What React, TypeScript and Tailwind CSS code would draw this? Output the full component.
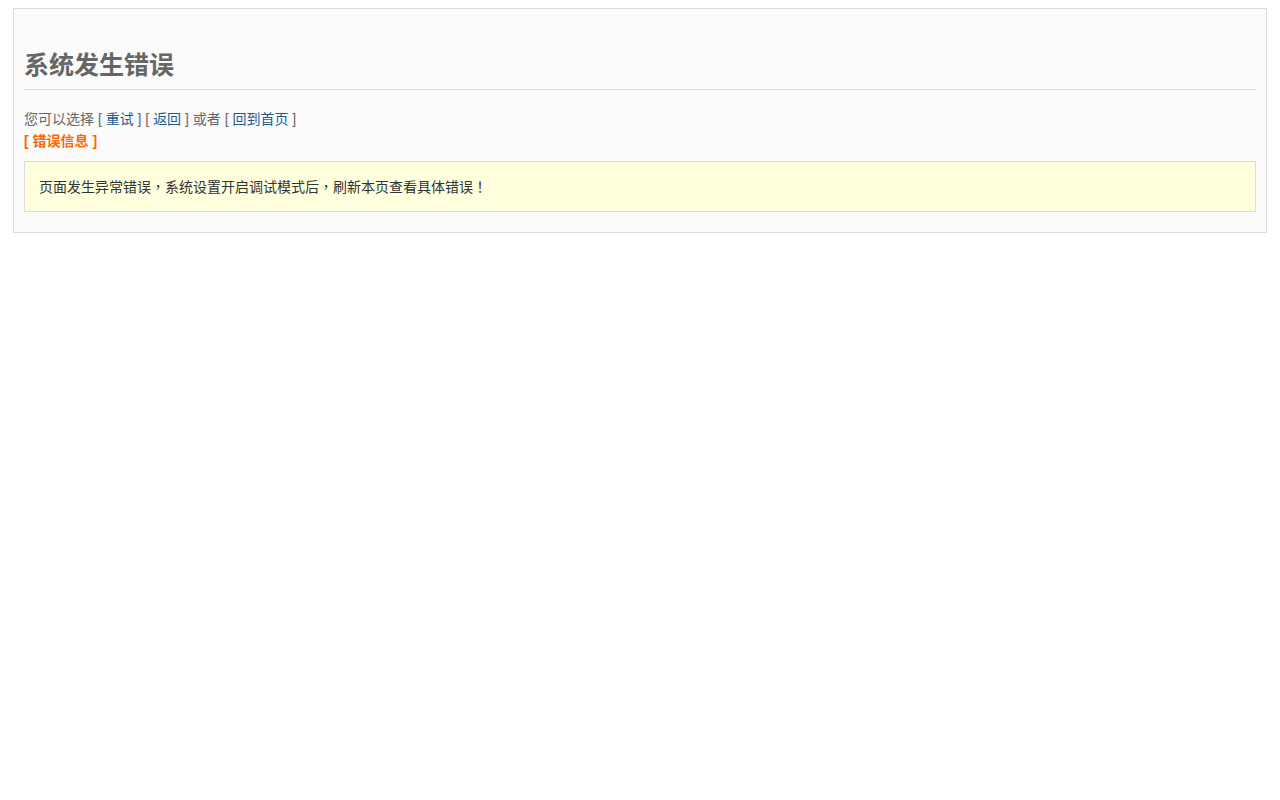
export default function App() {
  return (
    <div
      className="min-h-screen bg-white pt-2 px-[13px]"
      style={{ fontFamily: '"Liberation Sans", "Noto Sans CJK SC", sans-serif' }}
    >
      <div className="border border-[#dddddd] bg-[#fbfbfb] px-[10px] pt-[38px] pb-[20px]">
        {/* Title */}
        <h1 className="text-[25px] leading-[36px] font-bold text-[#666666] pb-[6px] border-b border-[#dddddd]">
          系统发生错误
        </h1>

        {/* Actions */}
        <p className="mt-[18px] text-[14px] leading-[22px] text-[#666666]">
          您可以选择 [ <a href="#" className="text-[#1d5a8c]">重试</a> ] [{' '}
          <a href="#" className="text-[#1d5a8c]">返回</a> ] 或者 [{' '}
          <a href="#" className="text-[#1d5a8c]">回到首页</a> ]
        </p>
        <p className="text-[14px] leading-[22px] font-bold text-[#ff6600]">[ 错误信息 ]</p>

        {/* Message */}
        <div
          className="mt-[9px] border border-[#dddddd] bg-[#ffffdd] px-[14px] pt-[14px] pb-[13px] text-[14px] leading-[22px] text-[#333333]"
          style={{ fontFamily: '"Liberation Sans", "Noto Sans CJK TC", sans-serif' }}
        >
          页面发生异常错误，系统设置开启调试模式后，刷新本页查看具体错误！
        </div>
      </div>
    </div>
  );
}
